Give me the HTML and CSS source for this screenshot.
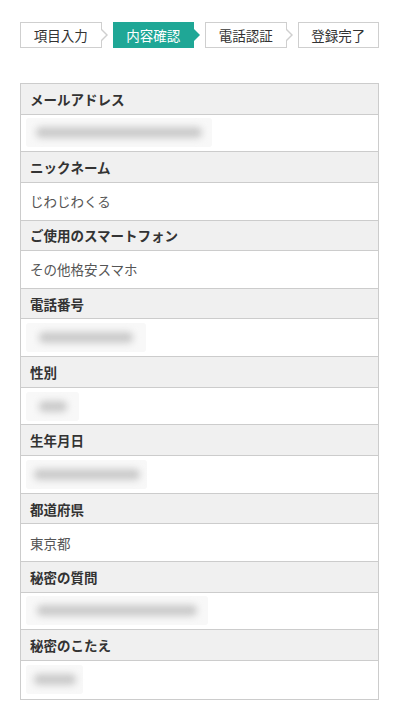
FILE: index.html
```html
<!DOCTYPE html>
<html lang="ja">
<head>
<meta charset="utf-8">
<title>内容確認</title>
<link rel="stylesheet" href="styles.css">
</head>
<body>
<div class="page">
  <ol class="steps">
    <li class="step">項目入力</li>
    <li class="step current">内容確認</li>
    <li class="step">電話認証</li>
    <li class="step last">登録完了</li>
  </ol>
  <dl class="info">
    <dt>メールアドレス</dt>
    <dd><span class="redacted" style="width:186px"><span class="bar" style="width:166px"></span></span></dd>
    <dt>ニックネーム</dt>
    <dd>じわじわくる</dd>
    <dt>ご使用のスマートフォン</dt>
    <dd>その他格安スマホ</dd>
    <dt>電話番号</dt>
    <dd><span class="redacted" style="width:120px"><span class="bar" style="width:94px"></span></span></dd>
    <dt>性別</dt>
    <dd><span class="redacted" style="width:53px"><span class="bar" style="width:28px"></span></span></dd>
    <dt>生年月日</dt>
    <dd><span class="redacted" style="width:121px"><span class="bar" style="width:106px"></span></span></dd>
    <dt>都道府県</dt>
    <dd>東京都</dd>
    <dt>秘密の質問</dt>
    <dd><span class="redacted" style="width:182px"><span class="bar" style="width:160px"></span></span></dd>
    <dt>秘密のこたえ</dt>
    <dd class="last"><span class="redacted" style="width:57px"><span class="bar" style="width:42px"></span></span></dd>
  </dl>
</div>
</body>
</html>
```

FILE: styles.css
```css
* { box-sizing: border-box; }
html, body { margin: 0; padding: 0; background: #fff; }
body {
  font-family: "Noto Sans CJK JP", "Noto Sans", sans-serif;
  color: #333;
}
.page {
  padding: 22px 21px 0 20px;
}
.steps {
  list-style: none;
  margin: 0 0 35px;
  padding: 0;
  display: flex;
  gap: 11px;
}
.step {
  position: relative;
  flex: 1;
  height: 26px;
  border: 1px solid #cfcfcf;
  background: #fff;
  color: #333;
  font-size: 13.5px;
  line-height: 24px;
  text-align: center;
}
.step::before,
.step::after {
  content: "";
  position: absolute;
  top: 50%;
  width: 0;
  height: 0;
  border-style: solid;
  border-color: transparent;
}
.step::before {
  left: 100%;
  margin-top: -7.5px;
  border-width: 7.5px 0 7.5px 7px;
  border-left-color: #cfcfcf;
}
.step::after {
  left: calc(100% - 1px);
  margin-top: -6.5px;
  border-width: 6.5px 0 6.5px 6.5px;
  border-left-color: #fff;
}
.step.current {
  background: #1fa796;
  border-color: #1fa796;
  color: #fff;
}
.step.current::before { border-left-color: #1fa796; }
.step.current::after { border-left-color: #1fa796; }
.step.last::before,
.step.last::after { display: none; }

.info {
  margin: 0;
  border: 1px solid #cccccc;
  font-size: 13.5px;
}
.info dt {
  height: 30.5px;
  margin: 0;
  padding: 0 9px;
  background: #f0f0f0;
  border-bottom: 1px solid #cccccc;
  font-weight: bold;
  color: #333;
  display: flex;
  align-items: center;
}
.info dd {
  height: 37.8px;
  margin: 0;
  padding: 0 9px;
  background: #fff;
  border-bottom: 1px solid #cccccc;
  color: #555;
  display: flex;
  align-items: center;
}
.info dd.last { border-bottom: 0; }
.redacted {
  display: flex;
  align-items: center;
  justify-content: center;
  height: 29px;
  margin-left: -4px;
  background: #f8f8f8;
  border-radius: 3px;
}
.bar {
  display: block;
  height: 11px;
  background: #cacaca;
  border-radius: 5px;
  filter: blur(3.5px);
}
```
